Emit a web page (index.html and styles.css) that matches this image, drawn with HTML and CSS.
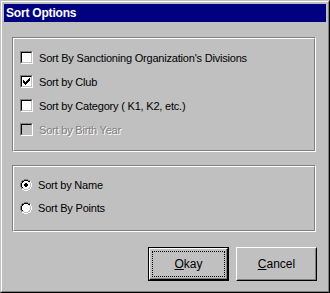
FILE: index.html
```html
<!DOCTYPE html>
<html>
<head>
<meta charset="utf-8">
<link rel="stylesheet" href="styles.css">
</head>
<body>
<div class="window">
  <div class="frame">
    <div class="titlebar"><span class="title">Sort Options</span></div>
    <div class="content">
      <div class="group g1">
        <div class="group-in">
          <div class="row"><span class="cb"></span><span class="txt">Sort By Sanctioning Organization's Divisions</span></div>
          <div class="row"><span class="cb"><svg width="7" height="7" viewBox="0 0 7 7" shape-rendering="crispEdges"><path d="M6 0h1v1h-1zM5 1h2v1h-2zM0 2h1v1h-1zM4 2h3v1h-3zM0 3h2v1h-2zM3 3h3v1h-3zM0 4h5v1h-5zM1 5h3v1h-3zM2 6h1v1h-1z" fill="#000"/></svg></span><span class="txt">Sort by Club</span></div>
          <div class="row"><span class="cb"></span><span class="txt">Sort by Category ( K1, K2, etc.)</span></div>
          <div class="row disabled"><span class="cb"></span><span class="txt">Sort by Birth Year</span></div>
        </div>
      </div>
      <div class="group g2">
        <div class="group-in">
          <div class="row"><span class="rb"><svg width="12" height="12" viewBox="0 0 12 12" shape-rendering="crispEdges"><path d="M4 0h4v1h-4zM2 1h2v1h-2zM8 1h2v1h-2zM1 2h1v2h-1zM0 4h1v4h-1zM1 8h1v2h-1z" fill="#808080"/><path d="M10 2h1v2h-1zM11 4h1v4h-1zM10 8h1v2h-1zM8 10h2v1h-2zM2 10h2v1h-2zM4 11h4v1h-4z" fill="#fff"/><path d="M4 1h4v1h-4zM2 2h2v1h-2zM8 2h2v1h-2zM2 3h1v1h-1zM1 4h1v4h-1zM2 8h1v1h-1z" fill="#000"/><path d="M9 3h1v1h-1zM10 4h1v4h-1zM9 8h1v1h-1zM8 9h2v1h-2zM2 9h2v1h-2zM4 10h4v1h-4z" fill="#c0c0c0"/><path d="M4 2h4v1h-4zM3 3h6v1h-6zM2 4h8v4h-8zM3 8h6v1h-6zM4 9h4v1h-4z" fill="#fff"/><path d="M5 4h2v1h-2zM4 5h4v2h-4zM5 7h2v1h-2z" fill="#000"/></svg></span><span class="txt">Sort by Name</span></div>
          <div class="row"><span class="rb"><svg width="12" height="12" viewBox="0 0 12 12" shape-rendering="crispEdges"><path d="M4 0h4v1h-4zM2 1h2v1h-2zM8 1h2v1h-2zM1 2h1v2h-1zM0 4h1v4h-1zM1 8h1v2h-1z" fill="#808080"/><path d="M10 2h1v2h-1zM11 4h1v4h-1zM10 8h1v2h-1zM8 10h2v1h-2zM2 10h2v1h-2zM4 11h4v1h-4z" fill="#fff"/><path d="M4 1h4v1h-4zM2 2h2v1h-2zM8 2h2v1h-2zM2 3h1v1h-1zM1 4h1v4h-1zM2 8h1v1h-1z" fill="#000"/><path d="M9 3h1v1h-1zM10 4h1v4h-1zM9 8h1v1h-1zM8 9h2v1h-2zM2 9h2v1h-2zM4 10h4v1h-4z" fill="#c0c0c0"/><path d="M4 2h4v1h-4zM3 3h6v1h-6zM2 4h8v4h-8zM3 8h6v1h-6zM4 9h4v1h-4z" fill="#fff"/></svg></span><span class="txt">Sort By Points</span></div>
        </div>
      </div>
      <div class="buttons">
        <div class="btn default"><div class="btn-in"><span class="focus"><u>O</u>kay</span></div></div>
        <div class="btn"><div class="btn-in"><span class="label"><u>C</u>ancel</span></div></div>
      </div>
    </div>
  </div>
</div>
</body>
</html>
```
FILE: styles.css
```css
html, body {
  margin: 0;
  padding: 0;
  background: #c0c0c0;
}
body {
  font-family: "Liberation Sans", Arial, sans-serif;
  font-size: 11px;
  color: #000;
}
.window {
  width: 330px;
  height: 293px;
  box-sizing: border-box;
  border: 1px solid;
  border-color: #c0c0c0 #000 #000 #c0c0c0;
  background: #c0c0c0;
}
.frame {
  height: 100%;
  box-sizing: border-box;
  border: 1px solid;
  border-color: #fff #808080 #808080 #fff;
  padding: 2px;
  display: flex;
  flex-direction: column;
}
.titlebar {
  height: 18px;
  background: #000080;
  display: flex;
  align-items: center;
  padding-left: 2px;
}
.title {
  color: #fff;
  font-weight: bold;
  font-size: 12px;
  letter-spacing: -0.2px;
}
.content {
  display: flex;
  flex-direction: column;
  padding-left: 8px;
  padding-right: 10px;
}
.group {
  box-sizing: border-box;
  border: 1px solid;
  border-color: #808080 #fff #fff #808080;
}
.group-in {
  height: 100%;
  box-sizing: border-box;
  border: 1px solid;
  border-color: #fff #808080 #808080 #fff;
  display: flex;
  flex-direction: column;
  padding-left: 6px;
}
.g1 {
  margin-top: 15px;
  height: 115px;
}
.g1 .group-in {
  padding-top: 12px;
  gap: 11px;
}
.g2 {
  margin-top: 13px;
  height: 67px;
}
.g2 .group-in {
  padding-top: 12px;
  gap: 11px;
}
.row {
  display: flex;
  align-items: center;
  height: 13px;
}
.g2 .row {
  height: 12px;
}
.cb {
  width: 13px;
  height: 13px;
  box-sizing: border-box;
  border: 1px solid;
  border-color: #808080 #fff #fff #808080;
  position: relative;
  flex: none;
}
.cb::before {
  content: "";
  position: absolute;
  inset: 0;
  border: 1px solid;
  border-color: #000 #c0c0c0 #c0c0c0 #000;
  background: #fff;
}
.cb svg {
  position: absolute;
  left: 2px;
  top: 2px;
  z-index: 1;
}
.disabled .cb::before {
  background: #c0c0c0;
}
.rb {
  width: 12px;
  height: 12px;
  flex: none;
  display: flex;
}
.txt {
  margin-left: 6px;
  white-space: nowrap;
  letter-spacing: -0.2px;
}
.disabled .txt {
  color: #808080;
  text-shadow: 1px 1px 0 #fff;
}
.buttons {
  margin-top: 15px;
  display: flex;
  justify-content: flex-end;
  gap: 7px;
  margin-right: -1px;
}
.btn {
  width: 81px;
  height: 34px;
  box-sizing: border-box;
  border: 1px solid;
  border-color: #fff #000 #000 #fff;
}
.btn-in {
  height: 100%;
  box-sizing: border-box;
  border: 1px solid;
  border-color: #c0c0c0 #808080 #808080 #c0c0c0;
  display: flex;
  align-items: center;
  justify-content: center;
}
.btn.default {
  border: 1px solid #000;
}
.btn.default .btn-in {
  border-color: #fff #000 #000 #fff;
  box-shadow: inset -1px -1px 0 #808080;
  padding: 2px;
}
.focus {
  flex: 1;
  align-self: stretch;
  border: 1px dotted #000;
  display: flex;
  align-items: center;
  justify-content: center;
  font-size: 12px;
}
.label {
  font-size: 12px;
}
u {
  text-decoration: underline;
  text-underline-offset: 1px;
}
```
